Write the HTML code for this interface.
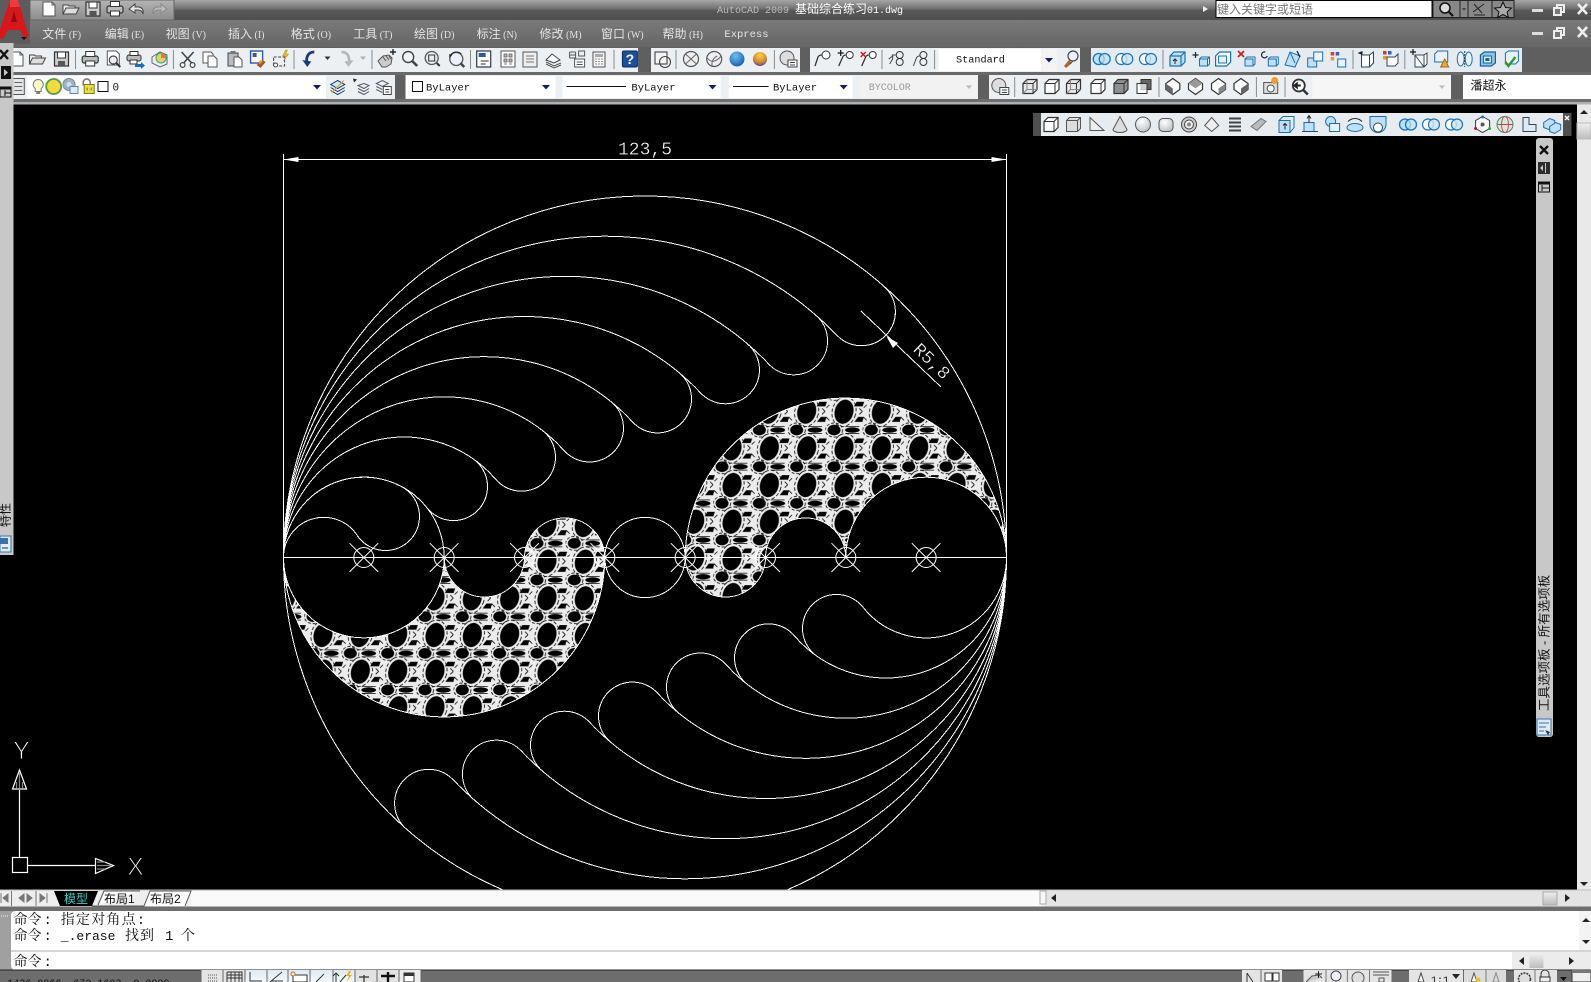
<!DOCTYPE html>
<html lang="zh"><head><meta charset="utf-8"><title>AutoCAD 2009</title>
<style>
html,body{margin:0;padding:0;background:#000;width:1591px;height:982px;overflow:hidden}
svg{display:block;position:absolute;left:0;top:0}
text{white-space:pre}
.m{font-family:"Liberation Mono","WenQuanYi Zen Hei",monospace;font-size:11px;fill:#111}
.c{font-family:"Liberation Sans","WenQuanYi Zen Hei","Noto Sans CJK SC",sans-serif;font-size:12px;fill:#111}
.menu{fill:#e4e4e4}
.cmd{font-family:"Liberation Mono","Noto Serif CJK SC",monospace;font-size:14px;fill:#111}
.cad{font-family:"Liberation Mono",monospace;fill:#fff;font-size:18px;stroke:#000;stroke-width:.35px}
.s{fill:none;stroke:#333;stroke-width:1}
</style></head><body>
<svg width="1591" height="982" viewBox="0 0 1591 982" xmlns="http://www.w3.org/2000/svg">
<defs>
<linearGradient id="tb" x1="0" y1="0" x2="0" y2="1"><stop offset="0" stop-color="#a6a6a6"/><stop offset=".4" stop-color="#737373"/><stop offset=".5" stop-color="#585858"/><stop offset="1" stop-color="#4e4e4e"/></linearGradient>
<linearGradient id="qa" x1="0" y1="0" x2="0" y2="1"><stop offset="0" stop-color="#b4b4b4"/><stop offset="1" stop-color="#8c8c8c"/></linearGradient>
<linearGradient id="mb" x1="0" y1="0" x2="0" y2="1"><stop offset="0" stop-color="#7a7a7a"/><stop offset="1" stop-color="#656565"/></linearGradient>
<linearGradient id="st" x1="0" y1="0" x2="0" y2="1"><stop offset="0" stop-color="#dfeaf3"/><stop offset="1" stop-color="#f4f8fb"/></linearGradient>
<linearGradient id="sc" x1="0" y1="0" x2="0" y2="1"><stop offset="0" stop-color="#f0f0f0"/><stop offset="1" stop-color="#bcbcbc"/></linearGradient>
<radialGradient id="bb" cx=".4" cy=".3" r=".8"><stop offset="0" stop-color="#6fc0f0"/><stop offset="1" stop-color="#0a55a8"/></radialGradient>
<radialGradient id="gb" cx=".5" cy=".25" r=".8"><stop offset="0" stop-color="#ffd24a"/><stop offset=".6" stop-color="#d58a2a"/><stop offset="1" stop-color="#4a3aa8"/></radialGradient>
<radialGradient id="gs" cx=".4" cy=".3" r=".8"><stop offset="0" stop-color="#ffffff"/><stop offset="1" stop-color="#b8bcc0"/></radialGradient>
<pattern id="hatchR" patternUnits="userSpaceOnUse" width="37.33" height="36.67" patternTransform="translate(788.03,393.37)"><use href="#tile"/></pattern>
<pattern id="hatchL" patternUnits="userSpaceOnUse" width="37.33" height="36.67" patternTransform="translate(416.33,616.67)"><use href="#tile"/></pattern>
<g id="tile">
<rect width="37.33" height="36.67" fill="#ececec"/>
<g fill="none" stroke="#000" stroke-width=".8">
<ellipse cx="18.67" cy="18.33" rx="11.800" ry="15" stroke-dasharray="3.500 2" transform="rotate(16 18.67 18.33)"/>
<ellipse cx="8.67" cy="0" rx="8.600" ry="7" stroke-dasharray="3 1.800"/><ellipse cx="8.67" cy="36.67" rx="8.600" ry="7" stroke-dasharray="3 1.800"/>
<path d="M20 3.500h14M20 33.200h14M1 14.500l3-3M34 15l3 3M1 24l3 3M34 21l3-3"/>
</g>
<ellipse cx="18.67" cy="18.33" rx="9.300" ry="12.300" fill="#000" transform="rotate(16 18.67 18.33)"/>
<ellipse cx="8.67" cy="0" rx="6.500" ry="5.300" fill="#000"/><ellipse cx="8.67" cy="36.67" rx="6.500" ry="5.300" fill="#000"/>
<ellipse cx="27" cy="0" rx="7.400" ry="2.700" fill="#000"/><ellipse cx="27" cy="36.67" rx="7.400" ry="2.700" fill="#000"/>
<path d="M28.500 13l2.800-4.600h6v4.600zM0 8.400h1.500L0 13zM29 28.500l3.800-5h4.500v5zM0 23.500h1.300L0 27z" fill="#000"/>
</g>
<g id="new"><path d="M4 3h9l3 3v11H4z" fill="#fff" stroke="#555"/><path d="M13 3v3h3" fill="none" stroke="#555"/></g>
<g id="open"><path d="M2 15V6h5l1 1h6v2" fill="#eee" stroke="#444"/><path d="M2 15l3-6h13l-3 6z" fill="#ddd" stroke="#444"/></g>
<g id="save"><path d="M3 3h14v14H3z" fill="#ccc" stroke="#333" stroke-width="1.2"/><rect x="6" y="3" width="8" height="6" fill="#fff" stroke="#333"/><rect x="6.5" y="12" width="7" height="5" fill="#555"/></g>
<g id="print"><rect x="2" y="7" width="16" height="7" rx="2" fill="#bbb" stroke="#333" stroke-width="1.2"/><rect x="5.5" y="2.5" width="9" height="5" fill="#fff" stroke="#333"/><rect x="5.5" y="12" width="9" height="5" fill="#fff" stroke="#333"/></g>
<g id="prev"><path d="M4 2h9l3 3v11H4z" fill="#fff" stroke="#555"/><circle cx="10" cy="11" r="4" fill="#eef" stroke="#444" stroke-width="1.2"/><path d="M13 14l4 4" stroke="#333" stroke-width="2"/></g>
<g id="plot"><rect x="2" y="6" width="14" height="6" rx="2" fill="#bbb" stroke="#333"/><rect x="5" y="2.5" width="8" height="4" fill="#fff" stroke="#333"/><rect x="5" y="11" width="7" height="4" fill="#fff" stroke="#333"/><path d="M10 15h6v-2l4 3.5-4 3.500v-2h-6z" fill="#1a6fc4"/></g>
<g id="pub"><path d="M3 8l8-5 7 3v9l-7 3-8-4z" fill="#eee" stroke="#667"/><circle cx="12" cy="9" r="5" fill="#e3d26a" stroke="#3a7"/><path d="M12 4a5 5 0 0 1 5 5h-5z" fill="#e87a2a"/></g>
<g id="cut"><path d="M4 3l10 11M16 3L6 14" stroke="#444" stroke-width="1.6"/><circle cx="5" cy="16" r="2.4" fill="#fff" stroke="#444" stroke-width="1.2"/><circle cx="15" cy="16" r="2.4" fill="#fff" stroke="#444" stroke-width="1.2"/></g>
<g id="copy"><path d="M3 3h8l2 2v9H3z" fill="#fff" stroke="#555"/><path d="M8 7h6l3 3v8H8z" fill="#fff" stroke="#555"/></g>
<g id="paste"><rect x="3" y="4" width="10" height="13" fill="#bbb" stroke="#444"/><rect x="5.5" y="2" width="5" height="3" fill="#777"/><path d="M9 8h5l3 3v7H9z" fill="#fff" stroke="#555"/></g>
<g id="match"><rect x="3" y="2" width="12" height="12" fill="#fff" stroke="#2a5aa8" stroke-width="1.4"/><rect x="5" y="4" width="4" height="4" fill="#2a5aa8"/><path d="M9 16l6-5 3 2-5 6z" fill="#a85a1a"/><path d="M11 13l2-2 2 2-3 2z" fill="#e8a040"/></g>
<g id="block"><path d="M3 8h11v9H3z" fill="none" stroke="#444" stroke-dasharray="3 1.5"/><circle cx="5" cy="16" r="2" fill="#fff" stroke="#444"/><path d="M15 1l-3 6h3l-2 5 5-7h-3l2-4z" fill="#e8c020" stroke="#a80"  stroke-width=".5"/></g>
<g id="undo"><path d="M15 3C9 3 6 8 8 15" fill="none" stroke="#1b3a7a" stroke-width="2.8"/><path d="M3 11l5 7 4-5.500z" fill="#1b3a7a"/></g>
<g id="redo"><path d="M5 3c6 0 9 5 7 12" fill="none" stroke="#b8b8b8" stroke-width="2.8"/><path d="M17 11l-5 7-4-5.500z" fill="#b8b8b8"/></g>
<g id="dd"><path d="M-3 -1.500h6l-3 3.500z" fill="#333"/></g>
<g id="ddb"><path d="M-4 -2h8l-4 4.500z" fill="#14205c"/></g>
<g id="pan"><path d="M2 12l5-5 6-1 3 3-1 6-5 3H6z" fill="#ccc" stroke="#555"/><path d="M7 8l3 4M10 7l3 4M13 7l2 3" stroke="#555" fill="none"/><path d="M14 3h6M17 0v6" stroke="#222" stroke-width="1.4"/></g>
<g id="zoom"><circle cx="8.500" cy="8" r="5.500" fill="#eef4f8" stroke="#444" stroke-width="1.4"/><path d="M12.500 12l5 5" stroke="#444" stroke-width="2.6"/></g>
<g id="zoomw"><circle cx="9" cy="9" r="6.500" fill="#e8ecef" stroke="#555" stroke-width="1.3"/><rect x="6" y="6" width="6" height="6" fill="none" stroke="#333"/><path d="M14 14l3 3" stroke="#333" stroke-width="2"/></g>
<g id="zoomp"><circle cx="10" cy="10" r="6.500" fill="#eef" stroke="#555" stroke-width="1.3"/><path d="M3 5l3 1-3 3z" fill="#222"/><path d="M4 7C6 2 12 2 15 5" stroke="#222" fill="none"/><path d="M14 14l4 4" stroke="#444" stroke-width="2.4"/></g>
<g id="props"><rect x="3" y="2" width="14" height="16" fill="#fff" stroke="#335" stroke-width="1.2"/><rect x="5" y="4" width="7" height="4" fill="#2a5aa8"/><path d="M7 12h8M7 15h5" stroke="#333"/></g>
<g id="dc"><rect x="3" y="2" width="14" height="16" fill="#fff" stroke="#555"/><path d="M6 5h3v3H6zM11 5h3v3h-3zM6 10h3v3H6zM11 10h3v3h-3zM6 15h3M11 15h3" fill="#bbb" stroke="#555" stroke-width=".8"/></g>
<g id="sheet"><path d="M3 3h14v15H3z" fill="#eee" stroke="#555"/><path d="M6 7h8M6 10h8M6 13h8" stroke="#777"/></g>
<g id="mark"><path d="M3 11l6-6 8 6-6 3z" fill="#fff" stroke="#444"/><path d="M3 13l8 4 7-3M3 15l8 4 7-3" stroke="#555" fill="none"/></g>
<g id="ssm"><path d="M3 3h6M3 6h6M3 9h6M3 3v6M9 3v6" stroke="#555" fill="none"/><path d="M12 2h6v5h-6z" fill="none" stroke="#555"/><rect x="8" y="10" width="10" height="8" fill="#fff" stroke="#555"/><path d="M10 13h6M10 15.500h6" stroke="#555"/></g>
<g id="calc"><rect x="4" y="3" width="12" height="15" fill="#f3f3f3" stroke="#555"/><rect x="6" y="5" width="8" height="3" fill="#aaa"/><path d="M6.500 10h1M9.500 10h1M12.500 10h1M6.500 12.500h1M9.500 12.500h1M12.500 12.500h1M6.500 15h1M9.500 15h1M12.500 15h1" stroke="#333"/></g>
<g id="help"><rect x="3" y="2" width="15" height="16" rx="1.500" fill="#1a4f9c" stroke="#0a2a60"/><text x="10.500" y="15" text-anchor="middle" style="font:bold 14px 'Liberation Sans',sans-serif;fill:#fff">?</text></g>
<g id="boxc"><rect x="3" y="3" width="12" height="12" fill="#f4f4f4" stroke="#444" stroke-width="1.100"/><circle cx="13" cy="13" r="5.500" fill="none" stroke="#444" stroke-width="1.100"/></g>
<g id="sp1"><circle cx="10" cy="10" r="7.500" fill="#eee" stroke="#555" stroke-width="1.200"/><path d="M4.500 5l11 10M15.500 5l-11 10" stroke="#666"/></g>
<g id="sp2"><circle cx="10" cy="10" r="7.500" fill="#eee" stroke="#555" stroke-width="1.200"/><path d="M3 9c4 5 9 4 14-2M8 17c-1-4 1-8 5-10" stroke="#666" fill="none"/></g>
<g id="bb1"><circle cx="10" cy="10" r="7.500" fill="url(#bb)"/></g>
<g id="gb1"><circle cx="10" cy="10" r="7" fill="url(#gb)"/></g>
<g id="ballp"><circle cx="9" cy="9" r="7" fill="#ddd" stroke="#555"/><rect x="10" y="11" width="9" height="7" fill="#fff" stroke="#444"/><path d="M12 13.500h5M12 16h5" stroke="#444"/></g>
<g id="ld"><path d="M3 17l3-9q1-2 4-2" fill="none" stroke="#333" stroke-width="1.300"/><circle cx="14" cy="6" r="4" fill="#fff" stroke="#333"/></g>
<g id="ldp"><path d="M3 17l4-9q1-2 3-2" fill="none" stroke="#333" stroke-width="1.300"/><circle cx="14" cy="6" r="3.500" fill="#fff" stroke="#333"/><path d="M2 4h6M5 1v6" stroke="#111" stroke-width="1.200"/></g>
<g id="ldx"><path d="M3 17l4-9q1-2 3-2" fill="none" stroke="#333" stroke-width="1.300"/><circle cx="14" cy="6" r="3.500" fill="#fff" stroke="#333"/><path d="M2 3l5 5M7 3l-5 5" stroke="#c02020" stroke-width="1.400"/></g>
<g id="la"><path d="M2 10l4-3v3l-3 5M5 6h4" fill="none" stroke="#444"/><circle cx="13" cy="6" r="3.500" fill="none" stroke="#333"/><circle cx="13" cy="13" r="3.500" fill="none" stroke="#333"/></g>
<g id="lb"><path d="M3 17l3-8q1-2 3-2" fill="none" stroke="#444"/><circle cx="13" cy="6" r="3.500" fill="none" stroke="#333"/><circle cx="13" cy="13" r="3.500" fill="none" stroke="#333"/></g>
<g id="tstyle"><path d="M4 17l5-6 3 3-6 5z" fill="#a8642a"/><circle cx="13" cy="7" r="5" fill="#eef" stroke="#444" stroke-width="1.200"/><path d="M13 12l-3 3" stroke="#555"/></g>
<g id="ov"><circle cx="7" cy="10" r="5.500" fill="#bfe0f4" stroke="#1a76c0" stroke-width="1.300"/><circle cx="13" cy="10" r="5.500" fill="#bfe0f4" fill-opacity=".7" stroke="#1a76c0" stroke-width="1.300"/></g>
<g id="ov2"><circle cx="7" cy="10" r="5.500" fill="#fff" stroke="#1a76c0" stroke-width="1.200"/><circle cx="13" cy="10" r="5.500" fill="#cfe5f4" fill-opacity=".8" stroke="#1a76c0" stroke-width="1.200"/></g>
<g id="cb"><path d="M3 7l4-4h11v10l-4 4H3z" fill="#bfe0f4" stroke="#1a6fb0" stroke-width="1.200"/><path d="M3 7h11v10M14 7l4-4" fill="none" stroke="#1a6fb0" stroke-width="1.200"/><path d="M8 15V10M6 12l2-2 2 2" stroke="#223" fill="none"/></g>
<g id="cs"><rect x="9" y="10" width="8" height="7" fill="#bfe0f4" stroke="#1a6fb0"/><path d="M9 10l2-2h8v7l-2 2M17 10l2-2" fill="none" stroke="#1a6fb0"/><path d="M2 6h6M5 3v6" stroke="#222" stroke-width="1.200"/></g>
<g id="cc"><path d="M3 7l4-4h11v10l-4 4H3z" fill="#fff" stroke="#1a6fb0" stroke-width="1.200"/><rect x="6" y="7" width="8" height="7" fill="#e4f1fa" stroke="#1a6fb0"/></g>
<g id="cx"><rect x="9" y="10" width="8" height="7" fill="#bfe0f4" stroke="#1a6fb0"/><path d="M9 10l2-2h8v7l-2 2" fill="none" stroke="#1a6fb0"/><path d="M2 2l6 6M8 2l-6 6" stroke="#c82020" stroke-width="1.700"/></g>
<g id="cr"><rect x="9" y="10" width="8" height="7" fill="#bfe0f4" stroke="#1a6fb0"/><path d="M9 10l2-2h8v7l-2 2" fill="none" stroke="#1a6fb0"/><path d="M6 3a3 3 0 1 0 2 4" fill="none" stroke="#222" stroke-width="1.200"/></g>
<g id="ct"><path d="M3 16L8 3l10 4-5 11z" fill="#bfe0f4" stroke="#1a6fb0"/><path d="M8 3l5 11" stroke="#1a6fb0"/><path d="M15 2l3 6" stroke="#222" stroke-width="1.300"/></g>
<g id="cd"><rect x="3" y="9" width="9" height="9" fill="#bfe0f4" stroke="#1a6fb0"/><rect x="9" y="3" width="9" height="9" fill="#e8f3fa" stroke="#1a6fb0"/></g>
<g id="cp"><rect x="10" y="10" width="8" height="8" fill="#e8f3fa" stroke="#1a6fb0"/><rect x="3" y="3" width="3.500" height="3.500" fill="#d04030"/><rect x="8" y="3" width="3.500" height="3.500" fill="#3060c0"/><rect x="3" y="8" width="3.500" height="3.500" fill="#e0a020"/></g>
<g id="ci"><path d="M5 6h8l4-3v11l-4 4H5z" fill="#fff" stroke="#345"/><path d="M5 6v12M13 6v12" stroke="#345"/><path d="M1 4l5-2v4z" fill="#222"/></g>
<g id="cq"><path d="M6 8h8l3-3v9l-3 3H6z" fill="#fff" stroke="#345"/><rect x="2" y="2" width="3.500" height="3.500" fill="#c04030"/><rect x="7" y="2" width="3.500" height="3.500" fill="#3060c0"/><rect x="2" y="7" width="3.500" height="3.500" fill="#e0a020"/></g>
<g id="cl"><path d="M6 6h9l3-2v11l-3 3H6z" fill="#fff" stroke="#345"/><path d="M6 6l9 12M15 6v12" stroke="#345"/><path d="M1 3h6M4 0v6" stroke="#111" stroke-width="1.200"/></g>
<g id="cm"><path d="M3 5l3-3h10v11H3z" fill="#e6f2fa" stroke="#1a6fb0"/><path d="M9 18l4-8 4 8z" fill="#e8b030" stroke="#a06a10"/></g>
<g id="cu"><ellipse cx="6" cy="10" rx="3.500" ry="7" fill="#e6f2fa" stroke="#1a6fb0"/><ellipse cx="14" cy="10" rx="3.500" ry="7" fill="#e6f2fa" stroke="#1a6fb0"/><path d="M10 2v16" stroke="#345" stroke-dasharray="2 1"/></g>
<g id="cv"><path d="M3 6l4-3h11v11l-4 3H3z" fill="#8fc4e8" stroke="#1a5f9e" stroke-width="1.200"/><rect x="6" y="7" width="8" height="7" fill="#d6ecf8" stroke="#1a5f9e"/><rect x="8" y="9" width="4" height="3" fill="#1a5f9e"/></g>
<g id="cw"><path d="M5 4l3-2h10v10l-3 3H5z" fill="#e6f2fa" stroke="#1a6fb0"/><path d="M5 13l3 4 7-9" fill="none" stroke="#2a9a30" stroke-width="2.400"/></g>
<g id="bulb"><path d="M10 3a5 5 0 0 1 3 9v3H7v-3a5 5 0 0 1 3-9z" fill="#fdf9c8" stroke="#777"/><path d="M8 16.500h4" stroke="#555" stroke-width="1.500"/></g>
<g id="sun"><circle cx="10" cy="10" r="7.500" fill="#f2dc3a" stroke="#5a9a50" stroke-width="1.800"/></g>
<g id="gear"><circle cx="8" cy="8" r="6" fill="#9cb4c4" stroke="#789"/><circle cx="8" cy="8" r="2.500" fill="#dde"/><rect x="9" y="10" width="8" height="7" fill="#dcebf5" stroke="#5a8ab0"/></g>
<g id="lock"><path d="M5 9V6a3.500 3.500 0 0 1 7 0v2" fill="none" stroke="#777" stroke-width="1.500"/><rect x="6" y="8" width="10" height="9" fill="#e8e040" stroke="#7a7a20"/><path d="M9 11v3M13 11v3" stroke="#7a7a20"/></g>
<g id="l1"><path d="M3 8l7-4 7 4-7 4z" fill="#cde8f8" stroke="#137"/><path d="M3 11l7 4 7-4M3 14l7 4 7-4" fill="none" stroke="#137"/><path d="M4 16l12-12" stroke="#e0a020" stroke-width="1.200"/></g>
<g id="l2"><path d="M7 9l6-2 5 2-5 3zM7 12l6 3 5-3M7 15l6 3 5-3" fill="none" stroke="#556"/><path d="M2 2l4 1-3 3z" fill="#222"/></g>
<g id="l3"><path d="M3 7l6-3 6 3-6 3zM3 10l6 3M3 13l6 3" fill="none" stroke="#556"/><rect x="10" y="10" width="8" height="8" fill="#fff" stroke="#444"/><path d="M12 13h4M12 15.500h4" stroke="#444"/></g>
<g id="l0"><rect x="4" y="2" width="12" height="16" fill="#e6e6e6" stroke="#555"/><path d="M6 6h8M6 10h8M6 14h8" stroke="#666"/></g>
<g id="wf1"><path d="M3 7l4-4h10v10l-4 4H3z" fill="#e8e8e8" stroke="#333" stroke-width="1.200"/><path d="M3 7h10v10M13 7l4-4" fill="none" stroke="#333"/><path d="M7 3v10l-4 4M7 13h10" fill="none" stroke="#888"/></g>
<g id="wf2"><path d="M3 7l4-4h10v10l-4 4H3z" fill="#fff" stroke="#333" stroke-width="1.200"/><path d="M3 7h10v10M13 7l4-4" fill="none" stroke="#333"/></g>
<g id="wf3"><path d="M3 7l4-4h10v10l-4 4H3z" fill="#8f8f8f" stroke="#333" stroke-width="1.200"/><path d="M3 7h10v10M13 7l4-4" fill="none" stroke="#333"/></g>
<g id="wf4"><path d="M7 3h10v10H7z" fill="#666" stroke="#333"/><path d="M3 7h10v10H3z" fill="#fff" fill-opacity=".7" stroke="#333"/></g>
<g id="v1"><path d="M10 2l7 5v6l-7 5-7-5V7z" fill="#fff" stroke="#333" stroke-width="1.200"/><path d="M3 7l7 5v6L3 13z" fill="#666"/></g>
<g id="v2"><path d="M10 2l7 5v6l-7 5-7-5V7z" fill="#fff" stroke="#333" stroke-width="1.200"/><path d="M3 7l7-5 7 5-7 5z" fill="#999"/></g>
<g id="v3"><path d="M10 2l7 5v6l-7 5-7-5V7z" fill="#fff" stroke="#333" stroke-width="1.200"/><path d="M17 7l-7 5v6l7-5z" fill="#888"/></g>
<g id="cam"><rect x="3" y="6" width="14" height="11" fill="#ddd" stroke="#555"/><circle cx="10" cy="12" r="3.500" fill="#fff" stroke="#555"/><circle cx="14" cy="4" r="3.500" fill="#e8a030"/></g>
<g id="rev"><circle cx="9" cy="9" r="6" fill="#fff" stroke="#333" stroke-width="1.800"/><path d="M3 9l5-4v8z" fill="#222"/><path d="M6 9h5" stroke="#222" stroke-width="2"/><path d="M13 13l5 5" stroke="#333" stroke-width="2.500"/></g>
<g id="sbox"><path d="M3 6l3-3h11v11l-3 3H3z" fill="#ddd" stroke="#555"/><path d="M3 6h11v11M14 6l3-3" fill="none" stroke="#555"/></g>
<g id="swedge"><path d="M3 16V3l14 13z" fill="#eee" stroke="#555"/></g>
<g id="scone"><path d="M10 2L3 15a7 3 0 0 0 14 0z" fill="#ddd" stroke="#555"/></g>
<g id="sball"><circle cx="10" cy="10" r="7.500" fill="url(#gs)" stroke="#555"/></g>
<g id="scyl"><rect x="3" y="4" width="14" height="13" rx="4" fill="url(#gs)" stroke="#555"/></g>
<g id="stor"><circle cx="10" cy="10" r="7.500" fill="#ccc" stroke="#444"/><circle cx="10" cy="10" r="4.500" fill="#eee" stroke="#444"/><circle cx="10" cy="10" r="2" fill="#888"/></g>
<g id="spyr"><path d="M10 3l7 8-7 6-7-6z" fill="#eee" stroke="#555"/></g>
<g id="shel"><path d="M4 4h12M4 8h12M4 12h12M4 16h12" stroke="#444" stroke-width="2"/></g>
<g id="spla"><path d="M3 12L13 4l5 3-9 9z" fill="#bbb" stroke="#777"/></g>
<g id="s3"><path d="M10 2l7 4v8l-7 4-7-4V6z" fill="#fff" stroke="#333"/><circle cx="10" cy="10" r="2" fill="#555"/><circle cx="3" cy="14" r="1.500" fill="#c03"/><circle cx="17" cy="14" r="1.500" fill="#3a3"/><circle cx="10" cy="2.500" r="1.500" fill="#36c"/></g>
<g id="s4"><circle cx="10" cy="10" r="8" fill="#d8e8d8" stroke="#4a8a5a"/><ellipse cx="10" cy="10" rx="3.500" ry="8" fill="none" stroke="#c84a7a"/><path d="M2 10h16" stroke="#c04040"/></g>
<g id="s5"><path d="M4 3h6v7h7v7H4z" fill="#dcebf5" stroke="#345"/></g>
<g id="s6"><path d="M2 8l6-4 5 2v5l-6 4-5-2z" fill="#bfe0f4" stroke="#1a6fb0"/><path d="M8 12l6-4 5 2v5l-6 4-5-2z" fill="#bfe0f4" stroke="#1a6fb0"/></g>
<g id="e1"><path d="M3 6h11v12H3z" fill="#bfe0f4" stroke="#1a6fb0"/><path d="M3 6l4-4h11v11l-4 5" fill="none" stroke="#1a6fb0"/><path d="M9 15V9M7 11l2-2 2 2" stroke="#223" fill="none"/></g>
<g id="e2"><path d="M4 17V8h10v9z" fill="#bfe0f4" stroke="#1a6fb0"/><path d="M9 8V1M7 4l2-3 2 3" stroke="#222" fill="none"/><path d="M2 17h16" stroke="#345"/></g>
<g id="e3"><circle cx="8" cy="7" r="5" fill="#bfe0f4" stroke="#1a6fb0"/><rect x="7" y="9" width="10" height="8" fill="#e6f2fa" stroke="#1a6fb0"/></g>
<g id="e4"><ellipse cx="10" cy="13" rx="8" ry="4" fill="#bfe0f4" stroke="#1a6fb0"/><path d="M3 7c4-4 10-4 14 0" fill="none" stroke="#222"/></g>
<g id="e5"><path d="M2 2h16v8a8 8 0 0 1-16 0z" fill="#bfe0f4" stroke="#1a6fb0"/><circle cx="10" cy="13" r="4.500" fill="#fff" stroke="#345"/></g>
</defs>

<!-- CAD canvas -->
<rect width="1591" height="982" fill="#000"/>
<path d="M283.500 557.500A160.670 160.670 0 0 0 604.830 557.500A40.170 40.170 0 0 0 524.500 557.500A40.170 40.170 0 0 1 444.170 557.500A80.330 80.330 0 0 1 283.500 557.500Z" fill="url(#hatchL)"/>
<path d="M1006.500 557.500A160.670 160.670 0 0 0 685.170 557.500A40.170 40.170 0 0 0 765.500 557.500A40.170 40.170 0 0 1 845.830 557.500A80.330 80.330 0 0 1 1006.500 557.500Z" fill="url(#hatchR)"/>
<g fill="none" stroke="#fff" stroke-width="1" shape-rendering="crispEdges">
<circle cx="645" cy="557.500" r="361.500"/>
<circle cx="645" cy="557.500" r="40.170"/>
<path d="M283.500 557.500A160.670 160.670 0 0 0 604.830 557.500A40.170 40.170 0 0 0 524.500 557.500A40.170 40.170 0 0 1 444.170 557.500A80.330 80.330 0 0 1 283.500 557.500Z"/>
<path d="M1006.500 557.500A160.670 160.670 0 0 0 685.170 557.500A40.170 40.170 0 0 0 765.500 557.500A40.170 40.170 0 0 1 845.830 557.500A80.330 80.330 0 0 1 1006.500 557.500Z"/>
<path d="M283.500 557.500A80.330 80.330 0 0 1 444.170 557.500"/>
<g id="fingersA">
<path d="M283.500 557.500A40.170 40.170 0 0 1 357.160 535.320A34 34 0 1 0 401.400 486.480"/>
</g>
<g id="fingers">
<path d="M283.500 557.500A80.330 80.330 0 0 1 426.830 507.660A34 34 0 1 0 472.960 458.690"/>
<path d="M283.500 557.500A120.500 120.500 0 0 1 495.640 479.260A34 34 0 1 0 542.260 430.250"/>
<path d="M283.500 557.500A160.670 160.670 0 0 1 564.120 450.600A34 34 0 1 0 610.930 401.580"/>
<path d="M283.500 557.500A200.830 200.830 0 0 1 632.430 421.860A34 34 0 1 0 679.350 372.850"/>
<path d="M283.500 557.500A241 241 0 0 1 700.650 393.020A34 34 0 1 0 747.630 344"/>
<path d="M283.500 557.500A281.170 281.170 0 0 1 768.820 364.160A34 34 0 1 0 815.820 315.140"/>
<path d="M283.500 557.500A321.330 321.330 0 0 1 836.930 335.300A34 34 0 1 0 883.980 286.270"/>
</g>
<use href="#fingers" transform="rotate(180 645 557.500)"/>
<path d="M283.500 557.500H1006.500"/>
<path d="M283.500 154V557M1006.500 154V557"/>
<path d="M283.500 159.500H1006.500"/>
<path d="M861 311L941 387"/>
</g>
<g fill="none" stroke="#fff" stroke-width="1">
<g id="mk"><circle cx="363.830" cy="557.500" r="10"/><path d="M349.500 543.200l28.700 28.700M378.200 543.200l-28.700 28.700"/></g>
<use href="#mk" x="80.330"/><use href="#mk" x="160.670"/><use href="#mk" x="241"/><use href="#mk" x="321.330"/><use href="#mk" x="401.670"/><use href="#mk" x="482"/><use href="#mk" x="562.330"/>
</g>
<path d="M283.500 159.500l15-2.500v5zM1006.500 159.500l-15-2.500v5z" fill="#fff"/>
<path d="M886.500 336.500l11.500 6.500-5 5z" fill="#fff"/>
<text class="cad" x="645" y="154.500" text-anchor="middle">123,5</text>
<text class="cad" transform="translate(932 361) rotate(44)" text-anchor="middle" y="6">R5,8</text>
<!-- UCS -->
<g fill="none" stroke="#fff" stroke-width="1.200">
<rect x="12.500" y="857.500" width="15" height="15"/>
<path d="M19.500 857V790M28 865.500H95.500"/>
<path d="M19.500 770l7 19h-14z"/><path d="M19.500 772v16M16.500 782v6M22.500 782v6" stroke="#888"/>
<path d="M113.500 865.500l-18-7v15z"/><path d="M97 865.500h14M97 862h8M97 869h8" stroke="#888"/>
</g>
<text x="21.500" y="759" text-anchor="middle" style="font:25px 'Liberation Sans',sans-serif;fill:#fff;stroke:#000;stroke-width:1.100px">Y</text>
<text x="135.500" y="875" text-anchor="middle" style="font:25px 'Liberation Sans',sans-serif;fill:#fff;stroke:#000;stroke-width:1.100px">X</text>

<!-- Title bar -->
<rect width="1591" height="21" fill="url(#tb)"/>
<rect y="20" width="1591" height="28" fill="url(#mb)"/>
<rect x="30" y="0" width="144" height="20" fill="url(#qa)" stroke="#666"/>
<rect x="0" y="0" width="30" height="44" fill="#5c5c5c"/>
<path d="M-3 38L10 0h8L29 36l-5 3-4-9H8l-5 9z" fill="#d8171c"/>
<path d="M11 22l3-11 3 11z" fill="#8e0d12"/><path d="M10 0h8l2 7H10z" fill="#ee3a3e"/>
<path d="M21 37h6l-3 3z" fill="#111"/>
<use href="#new" x="39" y="-1"/><use href="#open" x="61" y="-1"/><use href="#save" x="83" y="-1"/><use href="#print" x="105" y="-1"/>
<path d="M129 9l6-5v3h4q5 1 4 7-1-4-5-4h-3v3z" fill="#e8e8e8" stroke="#444"/><path d="M167 9l-6-5v3h-4q-5 1-4 7 1-4 5-4h3v3z" fill="#bbb" stroke="#888"/>
<text x="717" y="13" class="m" style="fill:#bdbdbd;font-size:10px">AutoCAD 2009</text>
<text x="795" y="13" class="c" style="fill:#fff">基础综合练习<tspan style="font-family:'Liberation Mono',monospace;font-size:10px">01.dwg</tspan></text>
<path d="M1203 6l5 3-5 3z" fill="#eee"/>
<rect x="1216" y=".5" width="216" height="17" fill="#fff" stroke="#000"/>
<text x="1217" y="13.500" class="c" style="fill:#777">键入关键字或短语</text>
<rect x="1433" y=".5" width="81" height="17" fill="#888" stroke="#222"/>
<path d="M1460 1v16M1468 1v16M1492 1v16" stroke="#222"/>
<circle cx="1445" cy="8" r="5" fill="#ddd" stroke="#111" stroke-width="1.500"/><path d="M1449 12l4 4" stroke="#111" stroke-width="2"/>
<path d="M1462 8h4l-2 3z" fill="#444"/>
<path d="M1474 4l8 9M1484 4l-11 8M1474 15h11" stroke="#222" fill="none"/>
<path d="M1503 2l2.500 5.500 6 .5-4.500 4 1.500 5.500-5.500-3-5.500 3 1.500-5.500-4.500-4 6-.5z" fill="#aaa" stroke="#111"/>
<g id="wb"><rect x="1532" y="9" width="11" height="3" fill="#ddd"/><rect x="1557" y="5" width="7" height="7" fill="none" stroke="#eee" stroke-width="2"/><rect x="1554" y="8" width="7" height="7" fill="#777" stroke="#eee" stroke-width="2"/><path d="M1578 4l9 10M1587 4l-9 10" stroke="#eee" stroke-width="2.600"/></g>
<use href="#wb" y="23"/>
<!-- Menus -->
<g class="c menu" style="fill:#e4e4e4">
<text class="c menu" x="42.300" y="38">文件<tspan style="font-size:10px;font-family:'Liberation Serif',serif"> (F)</tspan></text>
<text class="c menu" x="104.800" y="38">编辑<tspan style="font-size:10px;font-family:'Liberation Serif',serif"> (E)</tspan></text>
<text class="c menu" x="165.600" y="38">视图<tspan style="font-size:10px;font-family:'Liberation Serif',serif"> (V)</tspan></text>
<text class="c menu" x="228" y="38">插入<tspan style="font-size:10px;font-family:'Liberation Serif',serif"> (I)</tspan></text>
<text class="c menu" x="290.700" y="38">格式<tspan style="font-size:10px;font-family:'Liberation Serif',serif"> (O)</tspan></text>
<text class="c menu" x="353.200" y="38">工具<tspan style="font-size:10px;font-family:'Liberation Serif',serif"> (T)</tspan></text>
<text class="c menu" x="414" y="38">绘图<tspan style="font-size:10px;font-family:'Liberation Serif',serif"> (D)</tspan></text>
<text class="c menu" x="476.600" y="38">标注<tspan style="font-size:10px;font-family:'Liberation Serif',serif"> (N)</tspan></text>
<text class="c menu" x="539.500" y="38">修改<tspan style="font-size:10px;font-family:'Liberation Serif',serif"> (M)</tspan></text>
<text class="c menu" x="601" y="38">窗口<tspan style="font-size:10px;font-family:'Liberation Serif',serif"> (W)</tspan></text>
<text class="c menu" x="662.500" y="38">帮助<tspan style="font-size:10px;font-family:'Liberation Serif',serif"> (H)</tspan></text>
<text class="m" x="724.400" y="37" style="fill:#e4e4e4;font-size:10.500px;font-family:'Liberation Mono',monospace">Express</text>
</g>
<!-- toolbars background -->
<rect y="47" width="1591" height="57" fill="#5f5f5f"/>
<rect y="72" width="1591" height="3" fill="#696969"/>
<rect y="99" width="1591" height="3" fill="#6e6e6e"/><rect y="102" width="1591" height="2.500" fill="#b0b0b0"/>
<rect x="13" y="48" width="625" height="24" fill="#edf0f2"/>
<rect x="651" y="48" width="149" height="24" fill="#edf0f2"/>
<rect x="810" y="48" width="270" height="24" fill="#edf0f2"/>
<rect x="1091" y="48" width="431" height="24" fill="#e4ecf2"/>
<rect x="13" y="75" width="382" height="24" fill="#edf0f2"/>
<rect x="405.500" y="75" width="572.500" height="24" fill="#edf0f2"/>
<rect x="989" y="75" width="462" height="24" fill="#edf0f2"/>
<rect x="1463" y="75" width="128" height="24" fill="#fff"/>
<rect x="27.400" y="76" width="298.600" height="22" fill="#fff"/>
<rect x="405.600" y="76" width="149.800" height="22" fill="#fff"/>
<rect x="562.400" y="76" width="158.200" height="22" fill="#fff"/>
<rect x="728.700" y="76" width="123.800" height="22" fill="#fff"/>
<rect x="859.600" y="76" width="118.400" height="22" fill="#f2f2f2"/>
<rect x="1312.300" y="76" width="138.700" height="22" fill="#f6f6f6"/>
<rect x="938.600" y="49" width="118.400" height="22" fill="#fff"/>
<rect x="1041" y="49" width="16" height="22" fill="#f4f4f4"/>
<path d="M75.500 50v19M173.400 50v19M294 50v19M372 50v19M470.500 50v19M614 50v19M676 50v19M774.400 50v19M882 50v19M934.600 50v19M1163 50v19M1353 50v19M1404.800 50v19M1014.700 77v20M1159 77v20M1256.400 77v20M1285 77v20M1272 115v20M1393.600 115v20M1468 115v20" stroke="#8a8a8a"/>
<!-- row 1 icons (y=49) -->
<g>
<use href="#new" x="7" y="49"/><use href="#open" x="27.500" y="49"/><use href="#save" x="51.500" y="49"/><use href="#print" x="80.200" y="49"/><use href="#prev" x="103.300" y="49"/><use href="#plot" x="125" y="49"/><use href="#pub" x="149" y="49"/><use href="#cut" x="177.600" y="49"/><use href="#copy" x="200" y="49"/><use href="#paste" x="225" y="49"/><use href="#match" x="247.600" y="49"/><use href="#block" x="270.600" y="49"/><use href="#undo" x="299.300" y="49"/><use href="#dd" x="327.500" y="58"/><use href="#redo" x="336.500" y="49"/><use href="#dd" x="363" y="58" opacity=".35"/><use href="#pan" x="376" y="49"/><use href="#zoom" x="399.700" y="49"/><use href="#zoomw" x="422.700" y="49"/><use href="#zoomp" x="446.300" y="49"/><use href="#props" x="473.700" y="49"/><use href="#dc" x="498" y="49"/><use href="#sheet" x="520" y="49"/><use href="#mark" x="543" y="49"/><use href="#ssm" x="566.600" y="49"/><use href="#calc" x="589" y="49"/><use href="#help" x="619.400" y="49"/>
<use href="#boxc" x="652" y="49"/><use href="#sp1" x="681" y="49"/><use href="#sp2" x="704.200" y="49"/><use href="#bb1" x="727" y="49"/><use href="#gb1" x="750" y="49"/><use href="#ballp" x="778" y="49"/>
<use href="#ld" x="812" y="49"/><use href="#ldp" x="835.700" y="49"/><use href="#ldx" x="858.700" y="49"/><use href="#la" x="886.700" y="49"/><use href="#lb" x="910.400" y="49"/>
<use href="#ddb" x="1049" y="60"/><use href="#tstyle" x="1060" y="49"/>
<use href="#ov" x="1091.700" y="49"/><use href="#ov2" x="1114.300" y="49"/><use href="#ov2" x="1138" y="49"/>
<use href="#cb" x="1167" y="49"/><use href="#cs" x="1190.500" y="49"/><use href="#cc" x="1212.600" y="49"/><use href="#cx" x="1236" y="49"/><use href="#cr" x="1259.300" y="49"/><use href="#ct" x="1282" y="49"/><use href="#cd" x="1304.700" y="49"/><use href="#cp" x="1327.700" y="49"/><use href="#ci" x="1356.500" y="49"/><use href="#cq" x="1381" y="49"/><use href="#cl" x="1409" y="49"/><use href="#cm" x="1431.700" y="49"/><use href="#cu" x="1454.700" y="49"/><use href="#cv" x="1477.400" y="49"/><use href="#cw" x="1500.400" y="49"/>
</g>
<text x="956" y="62.500" style="font:10.200px 'Liberation Mono',monospace;fill:#111">Standard</text>
<!-- row 2 icons (y=76.5) -->
<g>
<use href="#l0" x="8.300" y="76.500"/><use href="#bulb" x="28.200" y="76.500"/><use href="#sun" x="43.700" y="76.500"/><use href="#gear" x="61" y="76.500"/><use href="#lock" x="78.200" y="76.500"/>
<rect x="98" y="81.500" width="10" height="10" fill="#fff" stroke="#111"/>
<use href="#ddb" x="317" y="87"/><use href="#l1" x="327.700" y="76.500"/><use href="#l2" x="351" y="76.500"/><use href="#l3" x="373.300" y="76.500"/>
<rect x="412.500" y="81.500" width="10" height="10" fill="#fff" stroke="#111"/>
<use href="#ddb" x="546" y="87"/><use href="#ddb" x="712.500" y="87"/><use href="#ddb" x="843.600" y="87"/><use href="#dd" x="969" y="87" opacity=".3"/><use href="#dd" x="1442" y="87" opacity=".3"/>
<use href="#ballp" x="989.800" y="76.500"/><use href="#wf1" x="1020" y="76.500"/><use href="#wf2" x="1042" y="76.500"/><use href="#wf1" x="1063.500" y="76.500"/><use href="#wf2" x="1088" y="76.500"/><use href="#wf3" x="1111" y="76.500"/><use href="#wf4" x="1134" y="76.500"/>
<use href="#v1" x="1162.800" y="76.500"/><use href="#v2" x="1185.500" y="76.500"/><use href="#v3" x="1208.500" y="76.500"/><use href="#v1" x="1231" y="76.500" transform="translate(2482 0) scale(-1 1)"/>
<use href="#cam" x="1260.700" y="76.500"/><use href="#rev" x="1289.800" y="76.500"/>
</g>
<path d="M566.500 86.500H626M733 86.500H768.600" stroke="#111"/>
<text x="112.500" y="90.500" class="m">0</text>
<text x="426" y="90.500" style="font:10.500px 'Liberation Mono',monospace;fill:#111">ByLayer</text>
<text x="631.400" y="90.500" style="font:10.500px 'Liberation Mono',monospace;fill:#111">ByLayer</text>
<text x="773" y="90.500" style="font:10.500px 'Liberation Mono',monospace;fill:#111">ByLayer</text>
<text x="868.700" y="90" style="font:10px 'Liberation Mono',monospace;fill:#999">BYCOLOR</text>
<text x="1470.500" y="89.500" class="c">潘超永</text>
<!-- Floating toolbar -->
<rect x="1033" y="113" width="538" height="23" fill="#e6ecf0"/>
<rect x="1033" y="113" width="8" height="23" fill="#4f4f4f"/>
<rect x="1563" y="113" width="8.500" height="23" fill="#4f4f4f"/>
<path d="M1565 116l4 4M1569 116l-4 4" stroke="#fff" stroke-width="1.500"/>
<g>
<use href="#wf2" x="1041" y="114.500"/><use href="#sbox" x="1063.500" y="114.500"/><use href="#swedge" x="1087" y="114.500"/><use href="#scone" x="1110" y="114.500"/><use href="#sball" x="1133" y="114.500"/><use href="#scyl" x="1156" y="114.500"/><use href="#stor" x="1179" y="114.500"/><use href="#spyr" x="1201.700" y="114.500"/><use href="#shel" x="1225" y="114.500"/><use href="#spla" x="1248" y="114.500"/>
<use href="#e1" x="1276" y="114.500"/><use href="#e2" x="1300" y="114.500"/><use href="#e3" x="1322.600" y="114.500"/><use href="#e4" x="1345" y="114.500"/><use href="#e5" x="1368" y="114.500"/>
<use href="#ov" x="1398" y="114.500"/><use href="#ov2" x="1421" y="114.500"/><use href="#ov2" x="1444" y="114.500"/>
<use href="#s3" x="1472.600" y="114.500"/><use href="#s4" x="1495" y="114.500"/><use href="#s5" x="1519" y="114.500"/><use href="#s6" x="1541.700" y="114.500"/>
</g>
<!-- Right scrollbar -->
<rect x="1577" y="104.500" width="14" height="786" fill="#e9e9e9"/>
<rect x="1577" y="123" width="14" height="16" fill="url(#sc)" stroke="#bbb"/>
<path d="M1580 114h8l-4-4zM1580 882h8l-4 4z" fill="#222"/>
<!-- Tool palette strip -->
<rect x="1536" y="138" width="17" height="599" rx="3" fill="#c8c8c8"/>
<path d="M1540 146l8 8M1548 146l-8 8" stroke="#111" stroke-width="2.400"/>
<rect x="1538" y="162" width="12" height="12" fill="#111" fill-opacity=".85"/><path d="M1543 165v6l-3-3z" fill="#c8c8c8"/><rect x="1545" y="163" width="1" height="10" fill="#c8c8c8"/>
<rect x="1538.500" y="182" width="11" height="10" fill="#c8c8c8" stroke="#111"/><rect x="1538" y="182" width="12" height="2.500" fill="#111"/><path d="M1542 185v6M1542 188h7" stroke="#111"/>
<text transform="translate(1548.500 711) rotate(-90)" class="c" style="font-size:12.500px">工具选项板 - 所有选项板</text>
<rect x="1537" y="719" width="14" height="16" fill="#dcebf5" stroke="#3a70b0"/><path d="M1539 723h10M1539 727h7M1539 731h5" stroke="#3a70b0"/><path d="M1545 730l5 2-2 3z" fill="#333"/>
<!-- Left strip -->
<rect x="0" y="43" width="13.500" height="512" fill="#c8c8c8"/>
<path d="M0 50l8 9M8 50l-8 9" stroke="#111" stroke-width="2.400"/>
<rect x="1" y="66" width="10" height="13" fill="#111"/><path d="M4 69l4 3.500-4 3.500z" fill="#c8c8c8"/>
<rect x="0" y="87" width="11" height="10" fill="#c8c8c8" stroke="#111"/><rect x="0" y="87" width="11" height="2.500" fill="#111"/><path d="M5 90v6M5 93h6" stroke="#111"/>
<text transform="translate(9.500 527) rotate(-90)" class="c" style="font-size:12px">特性</text>
<rect x="0" y="536" width="11" height="16" fill="#dcebf5" stroke="#3a70b0"/><rect x="0" y="538" width="8" height="6" fill="#3a70b0"/><path d="M2 548h6" stroke="#333"/>
<!-- Tabs row -->
<rect y="890" width="1591" height="17" fill="#eeeeee"/>
<rect y="889.500" width="1591" height="1" fill="#bbb"/>
<rect x="191" y="891" width="850" height="16" fill="#fafafa"/>
<rect x="1045" y="891" width="546" height="16" fill="#e4e4e4"/>
<rect x="1040" y="891" width="6" height="13" fill="#f7f7f7" stroke="#aaa"/>
<path d="M1056 894v8l-5-4z" fill="#222"/>
<rect x="1543" y="892" width="14" height="13" fill="url(#sc)" stroke="#aaa"/>
<path d="M1565 894v8l5-4z" fill="#222"/>
<path d="M1 893v10M8 894v8l-5-4zM11.500 891v15M24 894v8l-5-4zM27 894v8l5-4zM36 891v15M40 894v8l5-4zM47 893v10" stroke="#777" fill="#777"/>
<path d="M54 891h44l-6 15H60z" fill="#000"/>
<text x="64" y="903" class="c" style="fill:#3fc9c4;font-size:12px">模型</text>
<path d="M98 905l6-14h36M92 906h52l6-15h41l-6 15" fill="#fff" stroke="#555"/>
<text x="104" y="903" class="c">布局1</text>
<text x="150" y="903" class="c">布局2</text>
<rect y="906.500" width="1591" height="5" fill="#6e6e6e"/>
<!-- Command area -->
<rect y="911" width="1591" height="59" fill="#fff"/>
<rect y="911" width="11" height="59" fill="#a0a0a0"/>
<path d="M11 911h5q-5 0-5 5zM11 970h5q-5 0-5-5z" fill="#a0a0a0"/>
<path d="M1 916h8" stroke="#eee" stroke-dasharray="1 1"/>
<rect x="1579" y="911" width="12" height="39" fill="#f3f3f3"/>
<path d="M1582 922h8l-4-4zM1582 940h8l-4 4z" fill="#222"/>
<path d="M11 951H1591" stroke="#aaa"/>
<rect x="1512" y="952" width="79" height="18" fill="#ececec"/>
<rect x="1529.500" y="953" width="14" height="15" fill="url(#sc)"/>
<path d="M1524 957v8l-5-4zM1569 957v8l5-4z" fill="#222"/>
<text x="13.500" y="924" class="cmd">命令<tspan dx="2">:</tspan></text><text x="60.800" y="924" class="cmd" letter-spacing="1.200">指定对角点:</text>
<text x="13.500" y="940" class="cmd">命令<tspan dx="2">:</tspan></text><text x="60.800" y="940" class="cmd" style="font-size:13px">_.erase</text><text x="125" y="940" class="cmd" letter-spacing="1">找到</text><text x="165" y="940" class="cmd">1</text><text x="181" y="940" class="cmd">个</text>
<text x="13.500" y="966" class="cmd">命令<tspan dx="2">:</tspan></text>
<!-- Status bar -->
<rect y="970" width="1591" height="12" fill="#6d6d6d"/>
<rect y="969.500" width="1591" height="1" fill="#222"/>
<text x="7.400" y="986" style="font:10px 'Liberation Mono',monospace;fill:#111">1436.8866, 670.1682, 0.0000</text>
<rect x="201" y="970" width="44" height="12" fill="#e4e4e4"/>
<rect x="245" y="970" width="110" height="12" fill="url(#st)"/>
<rect x="355" y="970" width="44" height="12" fill="#e2e2e2"/>
<rect x="399" y="970" width="22" height="12" fill="#ececec"/>
<path d="M201 970v12M223 970v12M245 970v12M267 970v12M288 970v12M310 970v12M333 970v12M355 970v12M377 970v12M399 970v12M421 970v12" stroke="#666"/>
<path d="M208 975h9M208 978h9M208 981h9" stroke="#555" stroke-dasharray="1 1"/>
<path d="M227 972h15v10M227 975h15M227 978h15M227 972v10M231 972v10M235 972v10M239 972v10" stroke="#333" fill="none"/>
<path d="M250 972v9h12" stroke="#333" fill="none"/>
<path d="M270 982l12-10M271 981h12" stroke="#333" fill="none"/>
<rect x="293" y="975" width="14" height="7" fill="#fff" stroke="#333"/><circle cx="293" cy="974" r="2" fill="#fff" stroke="#c60"/>
<path d="M316 982l8-8" stroke="#333"/>
<path d="M336 982v-9M333 976l3-3 3 3M340 982l6-7" stroke="#333" fill="none"/><path d="M349 971l-3 5h3l-2 5 5-6h-3l2-4z" fill="#e8b020"/>
<path d="M359 977h10M364 975v7" stroke="#333" stroke-width="1.300"/>
<path d="M381 976h14M388 972v10" stroke="#111" stroke-width="2.400"/>
<rect x="404" y="973" width="10" height="9" fill="#fff" stroke="#333"/><rect x="404" y="973" width="10" height="3" fill="#333"/>
<rect x="1242" y="970" width="40" height="12" fill="#e4e4e4"/><path d="M1261 970v12" stroke="#666"/>
<path d="M1247 973l6 9M1247 973v9" stroke="#333" fill="none"/><path d="M1265 973h7v8h-7zM1273 973h6v8h-6z" fill="#fff" stroke="#333"/>
<rect x="1303.500" y="970" width="88" height="12" fill="#e4e4e4"/>
<path d="M1326 970v12M1347.400 970v12M1369.500 970v12" stroke="#777"/>
<path d="M1306 982l6-6 7-1 3 3" fill="#ccc" stroke="#555"/><path d="M1315 974h7M1318.500 971v7" stroke="#222"/>
<circle cx="1336" cy="976" r="5" fill="#eef" stroke="#444"/><circle cx="1358" cy="978" r="6" fill="#ddd" stroke="#555"/>
<path d="M1373 972h16M1373 975h16M1379 978h5v4h-5z" stroke="#555" fill="none"/>
<rect x="1409" y="970" width="54" height="12" fill="#e4e4e4"/>
<path d="M1418 982l3-9 3 9z" fill="#fff" stroke="#444"/>
<text x="1431" y="983" style="font:10px 'Liberation Mono',monospace;fill:#111">1:1</text>
<path d="M1452 974h8l-4 5z" fill="#222"/>
<rect x="1464" y="970" width="42" height="12" fill="#dcdcdc"/><path d="M1486 970v12" stroke="#777"/>
<path d="M1471 982l3-9 3 9z" fill="#fff" stroke="#555"/><circle cx="1478" cy="980" r="2.500" fill="#e8c020"/>
<path d="M1493 982l3-9 3 9z" fill="#ddd" stroke="#888"/>
<rect x="1514" y="970" width="43" height="12" fill="#e4e4e4"/><path d="M1535 970v12" stroke="#777"/>
<circle cx="1524.500" cy="979" r="6" fill="#ddd" stroke="#333" stroke-width="1.500" stroke-dasharray="2 1"/>
<path d="M1541 977v-3a4 4 0 0 1 8 0v3" fill="none" stroke="#333"/><rect x="1540" y="977" width="10" height="5" fill="#eee" stroke="#333"/>
<path d="M1560 977h7l-3.500 4z" fill="#111"/>
<rect x="1572" y="970" width="19" height="12" fill="#eee" stroke="#333"/><rect x="1572" y="970" width="19" height="3" fill="#777"/>
</svg>
</body></html>
